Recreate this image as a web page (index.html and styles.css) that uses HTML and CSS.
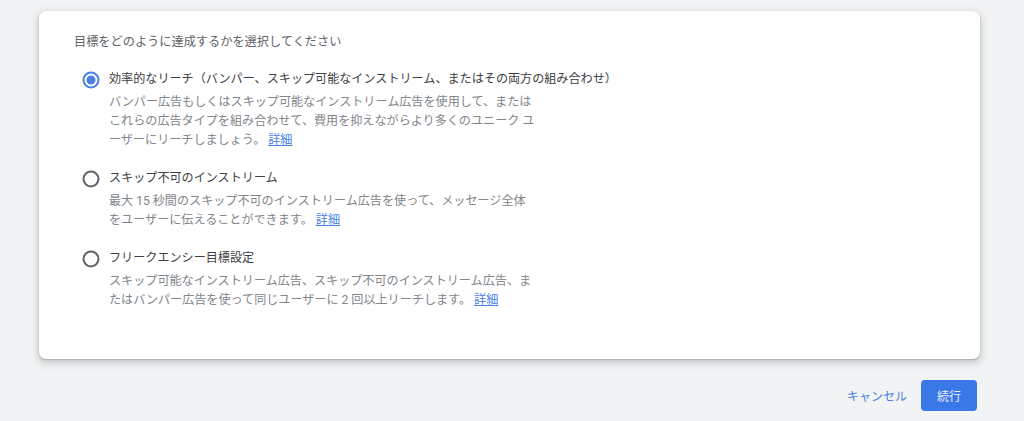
FILE: index.html
```html
<!DOCTYPE html>
<html lang="ja">
<head>
<meta charset="utf-8">
<title>目標</title>
<link rel="stylesheet" href="styles.css">
</head>
<body>
<div class="page">
  <section class="card">
    <h2 class="heading">目標をどのように達成するかを選択してください</h2>
    <div class="options">
      <div class="option">
        <div class="option-row">
          <svg class="radio" viewBox="0 0 18 18" width="18" height="18"><circle cx="9" cy="9" r="7.5" fill="none" stroke="#4a80e8" stroke-width="2"/><circle cx="9" cy="9" r="4.5" fill="#4a80e8"/></svg>
          <span class="label">効率的なリーチ（バンパー、スキップ可能なインストリーム、またはその両方の組み合わせ）</span>
        </div>
        <p class="desc">バンパー広告もしくはスキップ可能なインストリーム広告を使用して、または<br>これらの広告タイプを組み合わせて、費用を抑えながらより多くのユニーク ユ<br>ーザーにリーチしましょう。 <a href="#" class="link">詳細</a></p>
      </div>
      <div class="option">
        <div class="option-row">
          <svg class="radio" viewBox="0 0 18 18" width="18" height="18"><circle cx="9" cy="9" r="7.5" fill="none" stroke="#5f6368" stroke-width="2"/></svg>
          <span class="label">スキップ不可のインストリーム</span>
        </div>
        <p class="desc">最大 15 秒間のスキップ不可のインストリーム広告を使って、メッセージ全体<br>をユーザーに伝えることができます。 <a href="#" class="link">詳細</a></p>
      </div>
      <div class="option">
        <div class="option-row">
          <svg class="radio" viewBox="0 0 18 18" width="18" height="18"><circle cx="9" cy="9" r="7.5" fill="none" stroke="#5f6368" stroke-width="2"/></svg>
          <span class="label">フリークエンシー目標設定</span>
        </div>
        <p class="desc">スキップ可能なインストリーム広告、スキップ不可のインストリーム広告、ま<br>たはバンパー広告を使って同じユーザーに 2 回以上リーチします。 <a href="#" class="link">詳細</a></p>
      </div>
    </div>
  </section>
  <div class="actions">
    <button class="btn-cancel" type="button">キャンセル</button>
    <button class="btn-primary" type="button">続行</button>
  </div>
</div>
</body>
</html>
```

FILE: styles.css
```css
html, body {
  margin: 0;
  padding: 0;
  background: #f1f3f4;
  height: 100%;
}
body {
  font-family: Roboto, "Noto Sans CJK JP", sans-serif;
  font-size: 12px;
  color: #3c4043;
  overflow: hidden;
}
.page {
  padding: 11px 44px 0 39px;
}
.card {
  background: #ffffff;
  border-radius: 7px;
  box-shadow: 0 1px 2px rgba(60, 64, 67, 0.3), 0 3px 7px 2px rgba(60, 64, 67, 0.18);
  padding: 22px 35px 49px 35px;
}
.heading {
  margin: 0;
  font-size: 12.2px;
  font-weight: 400;
  line-height: 19px;
  color: #5f6368;
}
.options {
  margin-top: 18px;
  margin-left: 8px;
  display: flex;
  flex-direction: column;
  gap: 19px;
}
.option-row {
  display: flex;
  align-items: center;
  gap: 9px;
  height: 19px;
}
.radio {
  flex: none;
  display: block;
}
.label {
  font-size: 12.1px;
  line-height: 19px;
  color: #3c4043;
}
.desc {
  margin: 4px 0 0 27px;
  font-size: 12.1px;
  line-height: 19px;
  color: #80868b;
  white-space: nowrap;
}
.link {
  color: #4a80e8;
  text-decoration: underline;
}
.actions {
  display: flex;
  justify-content: flex-end;
  align-items: center;
  margin-top: 21px;
  margin-right: 3px;
  gap: 6px;
}
.btn-cancel {
  font-family: inherit;
  font-size: 12px;
  background: transparent;
  border: none;
  color: #4c82e0;
  height: 31px;
  padding: 0 8px;
  cursor: pointer;
}
.btn-primary {
  font-family: inherit;
  font-size: 12px;
  background: #3b78e7;
  border: none;
  border-radius: 4px;
  color: #e8efff;
  width: 56px;
  height: 31px;
  padding: 0;
  cursor: pointer;
}
```
